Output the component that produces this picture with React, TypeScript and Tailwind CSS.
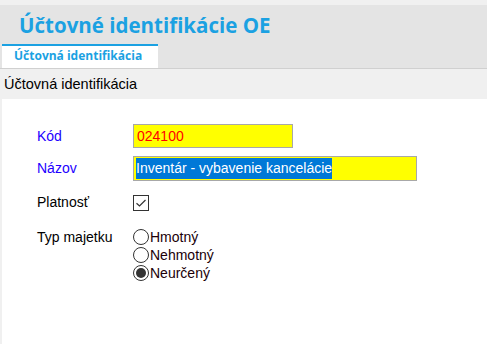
import { useState } from 'react'

const font = { fontFamily: '"Liberation Sans", Arial, sans-serif' }
const openSans = { fontFamily: '"Open Sans", sans-serif' }

function Radio({ label, checked, onClick }: { label: string; checked: boolean; onClick: () => void }) {
  return (
    <div className="flex h-[18px] items-center cursor-default" onClick={onClick}>
      <span className="flex h-[16px] w-[16px] items-center justify-center rounded-full border border-[#333] bg-white">
        {checked && <span className="h-[10px] w-[10px] rounded-full bg-[#333]"></span>}
      </span>
      <span className="ml-[1px] text-[14px] text-[#200008]">{label}</span>
    </div>
  )
}

export default function App() {
  const [typ, setTyp] = useState('neurceny')
  const [platnost, setPlatnost] = useState(true)

  return (
    <div className="h-[344px] w-[487px] overflow-hidden bg-[#f0f0f0]" style={font}>
      {/* Header */}
      <div className="mt-[5px] h-[64px] border-b border-[#d0d0d0] bg-[#e4e4e4]">
        <div className="h-[39px] pl-[19px] pt-[6px] text-[20.5px] font-bold leading-[28px] text-[#1ba1e2]" style={openSans}>
          Účtovné identifikácie OE
        </div>
        <div className="flex pl-[2px]">
          <div
            className="h-[24px] w-[156px] border-t-2 border-[#1ba1e2] bg-white pl-[12px] pt-[1px] text-[12px] font-bold leading-[18px] text-[#1ba1e2]"
            style={openSans}
          >
            Účtovná identifikácia
          </div>
        </div>
      </div>

      {/* Section */}
      <div className="flex h-[30px] items-center pl-[4px] pt-[2px] text-[14.5px] text-black">Účtovná identifikácia</div>

      {/* Form */}
      <div className="ml-[2px] h-[245px] bg-white pl-[35px] pt-[25px]">
        <div className="grid grid-cols-[96px_1fr] items-center">
          <div className="text-[14px] text-[#2200ff]">Kód</div>
          <div className="flex h-[24px] w-[160px] items-center border border-[#a8a8a8] bg-[#ffff00] pl-[3px] text-[14px] text-[#ff0000]">
            024100
          </div>

          <div className="mt-[8px] text-[14px] text-[#2200ff]">Názov</div>
          <div className="mt-[8px] flex h-[25px] w-[284px] items-center border border-[#a8a8a8] bg-[#ffff00] pl-[2px] text-[14px]">
            <span className="bg-[#0078d7] text-white">Inventár - vybavenie kancelácie</span>
          </div>

          <div className="mt-[11px] text-[14px] text-black">Platnosť</div>
          <div className="mt-[11px]">
            <span
              className="flex h-[16px] w-[16px] items-center justify-center border border-[#333] bg-white"
              onClick={() => setPlatnost(!platnost)}
            >
              {platnost && (
                <svg width="12" height="12" viewBox="0 0 12 12" fill="none">
                  <path d="M1.5 6.2 L4.5 9 L10.5 3" stroke="#333" strokeWidth="1.2" />
                </svg>
              )}
            </span>
          </div>

          <div className="mt-[15px] self-start text-[14px] leading-[18px] text-black">Typ majetku</div>
          <div className="mt-[15px] flex flex-col">
            <Radio label="Hmotný" checked={typ === 'hmotny'} onClick={() => setTyp('hmotny')} />
            <Radio label="Nehmotný" checked={typ === 'nehmotny'} onClick={() => setTyp('nehmotny')} />
            <Radio label="Neurčený" checked={typ === 'neurceny'} onClick={() => setTyp('neurceny')} />
          </div>
        </div>
      </div>
    </div>
  )
}
